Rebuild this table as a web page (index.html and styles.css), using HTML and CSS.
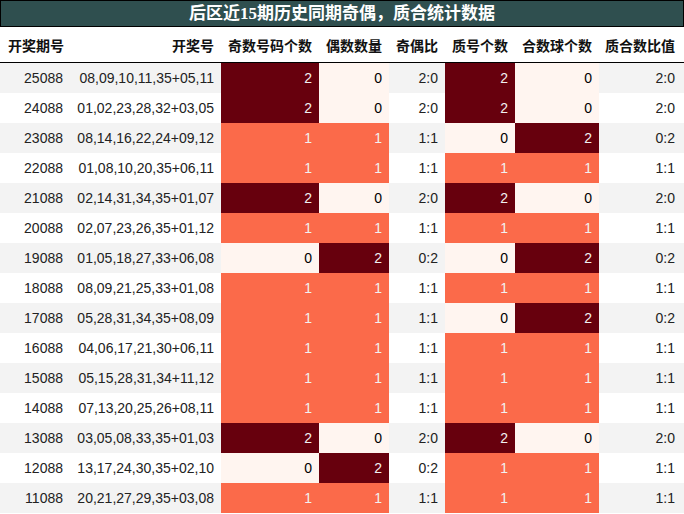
FILE: index.html
```html
<!DOCTYPE html>
<html>
<head>
<meta charset="utf-8">
<link rel="stylesheet" href="styles.css">
</head>
<body>
<div class="page">
  <div class="title">后区近15期历史同期奇偶，质合统计数据</div>
  <table class="grid">
    <colgroup>
      <col class="c1"><col class="c2"><col class="c3"><col class="c4"><col class="c5"><col class="c6"><col class="c7"><col class="c8">
    </colgroup>
    <thead>
      <tr><th>开奖期号</th><th>开奖号</th><th>奇数号码个数</th><th>偶数数量</th><th>奇偶比</th><th>质号个数</th><th>合数球个数</th><th>质合数比值</th></tr>
    </thead>
    <tbody>
      <tr><td>25088</td><td>08,09,10,11,35+05,11</td><td class="h2">2</td><td class="h0">0</td><td>2:0</td><td class="h2">2</td><td class="h0">0</td><td>2:0</td></tr>
      <tr><td>24088</td><td>01,02,23,28,32+03,05</td><td class="h2">2</td><td class="h0">0</td><td>2:0</td><td class="h2">2</td><td class="h0">0</td><td>2:0</td></tr>
      <tr><td>23088</td><td>08,14,16,22,24+09,12</td><td class="h1">1</td><td class="h1">1</td><td>1:1</td><td class="h0">0</td><td class="h2">2</td><td>0:2</td></tr>
      <tr><td>22088</td><td>01,08,10,20,35+06,11</td><td class="h1">1</td><td class="h1">1</td><td>1:1</td><td class="h1">1</td><td class="h1">1</td><td>1:1</td></tr>
      <tr><td>21088</td><td>02,14,31,34,35+01,07</td><td class="h2">2</td><td class="h0">0</td><td>2:0</td><td class="h2">2</td><td class="h0">0</td><td>2:0</td></tr>
      <tr><td>20088</td><td>02,07,23,26,35+01,12</td><td class="h1">1</td><td class="h1">1</td><td>1:1</td><td class="h1">1</td><td class="h1">1</td><td>1:1</td></tr>
      <tr><td>19088</td><td>01,05,18,27,33+06,08</td><td class="h0">0</td><td class="h2">2</td><td>0:2</td><td class="h0">0</td><td class="h2">2</td><td>0:2</td></tr>
      <tr><td>18088</td><td>08,09,21,25,33+01,08</td><td class="h1">1</td><td class="h1">1</td><td>1:1</td><td class="h1">1</td><td class="h1">1</td><td>1:1</td></tr>
      <tr><td>17088</td><td>05,28,31,34,35+08,09</td><td class="h1">1</td><td class="h1">1</td><td>1:1</td><td class="h0">0</td><td class="h2">2</td><td>0:2</td></tr>
      <tr><td>16088</td><td>04,06,17,21,30+06,11</td><td class="h1">1</td><td class="h1">1</td><td>1:1</td><td class="h1">1</td><td class="h1">1</td><td>1:1</td></tr>
      <tr><td>15088</td><td>05,15,28,31,34+11,12</td><td class="h1">1</td><td class="h1">1</td><td>1:1</td><td class="h1">1</td><td class="h1">1</td><td>1:1</td></tr>
      <tr><td>14088</td><td>07,13,20,25,26+08,11</td><td class="h1">1</td><td class="h1">1</td><td>1:1</td><td class="h1">1</td><td class="h1">1</td><td>1:1</td></tr>
      <tr><td>13088</td><td>03,05,08,33,35+01,03</td><td class="h2">2</td><td class="h0">0</td><td>2:0</td><td class="h2">2</td><td class="h0">0</td><td>2:0</td></tr>
      <tr><td>12088</td><td>13,17,24,30,35+02,10</td><td class="h0">0</td><td class="h2">2</td><td>0:2</td><td class="h1">1</td><td class="h1">1</td><td>1:1</td></tr>
      <tr><td>11088</td><td>20,21,27,29,35+03,08</td><td class="h1">1</td><td class="h1">1</td><td>1:1</td><td class="h1">1</td><td class="h1">1</td><td>1:1</td></tr>
    </tbody>
  </table>
</div>
</body>
</html>
```

FILE: styles.css
```css
html, body {
  margin: 0;
  padding: 0;
  background: #ffffff;
}

.page {
  width: 684px;
  height: 514px;
  overflow: hidden;
  font-family: "Liberation Sans", Arial, "Noto Sans CJK SC", sans-serif;
}

.title {
  box-sizing: border-box;
  height: 27px;
  border: 1px solid #000;
  background: #2f4f4f;
  color: #ffffff;
  font-family: "Liberation Serif", "Noto Sans CJK SC", serif;
  font-weight: bold;
  font-size: 17px;
  line-height: 25px;
  text-align: center;
}

.grid {
  width: 684px;
  table-layout: fixed;
  border-collapse: collapse;
  border-spacing: 0;
}

.c1 { width: 67px; }
.c2 { width: 154px; }
.c3 { width: 98px; }
.c4 { width: 70px; }
.c5 { width: 56px; }
.c6 { width: 70px; }
.c7 { width: 84px; }
.c8 { width: 85px; }

.grid th {
  height: 35px;
  padding: 0 7px 0 0;
  text-align: right;
  font-family: "Noto Sans CJK SC", sans-serif;
  font-weight: bold;
  font-size: 14px;
  color: #111;
  background: #fff;
  border-bottom: 1px solid #000;
  white-space: nowrap;
}

.grid th:first-child {
  padding-right: 3px;
}

.grid td {
  height: 30px;
  padding: 0 7px 0 0;
  text-align: right;
  font-size: 14px;
  color: #222;
  white-space: nowrap;
  background: #ffffff;
}

.grid td:first-child {
  padding-right: 4px;
}

.grid th:last-child,
.grid td:last-child {
  padding-right: 9px;
}

.grid tbody tr:nth-child(odd) td {
  background: #f3f3f3;
}

.grid tbody tr td.h0 {
  background: #fff5f0;
  color: #000;
}

.grid tbody tr td.h1 {
  background: #fb6a4a;
  color: #f1f1f1;
}

.grid tbody tr td.h2 {
  background: #67000d;
  color: #f1f1f1;
}
```
